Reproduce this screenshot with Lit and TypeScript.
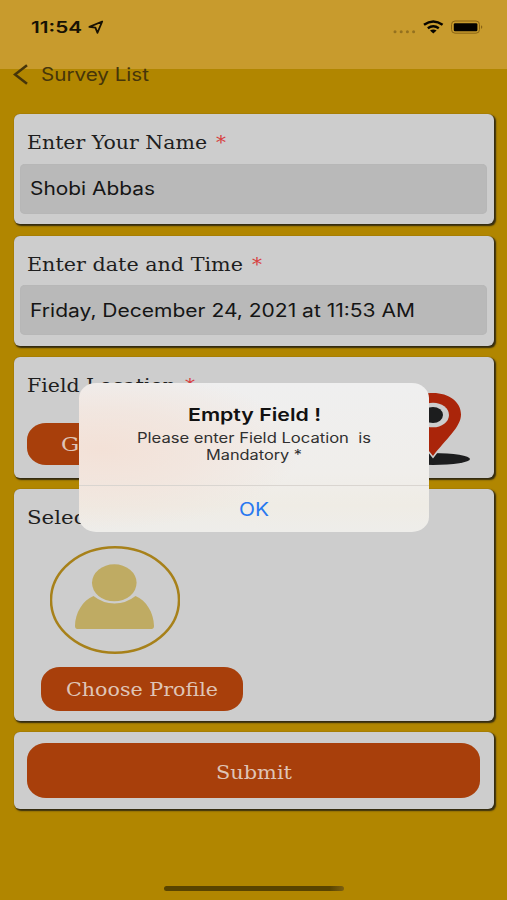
import { LitElement, html, css, svg } from "lit";
import { customElement, property } from "lit/decorators.js";

/** One line of text set to an exact measure, with the wide letterforms of the app. */
@customElement("wide-text")
class WideText extends LitElement {
  @property() text = "";
  @property({ type: Number }) measure = 100;

  static styles = css`
    :host { display: block; flex: none; height: 24px; }
    svg { display: block; overflow: visible; }
    text { fill: currentColor; white-space: pre; }
  `;

  render() {
    return html`<svg width=${this.measure} height="24">
      ${svg`<text x="0" y="18" textLength=${this.measure} lengthAdjust="spacingAndGlyphs">${this.text}</text>`}
    </svg>`;
  }
}

@customElement("status-bar")
class StatusBar extends LitElement {
  static styles = css`
    :host { display: flex; height: 69px; box-sizing: border-box; padding: 15px 24px 0 31px; background: #c89b2d; color: #171104; font: 600 16px Inter, sans-serif; }
    .right { margin-left: auto; }
    svg { display: block; }
    .arrow { margin: 5px 0 0 6px; }
  `;
  render() {
    return html`
      <wide-text text="11:54" measure="51"></wide-text>
      <svg class="arrow" width="16" height="15" viewBox="0 0 16 15">
        <path d="M14.2 1.5 1.4 6.8 7.4 7.6 9.4 12.8Z" fill="none" stroke="#171104" stroke-width="1.8" stroke-linejoin="round" />
      </svg>
      <svg class="right" width="90" height="22" viewBox="0 0 90 22">
        <g fill="#94711f">
          <circle cx="2" cy="16.7" r="1.5" /><circle cx="8.2" cy="16.7" r="1.5" />
          <circle cx="14.4" cy="16.7" r="1.5" /><circle cx="20.6" cy="16.7" r="1.5" />
        </g>
        <g fill="none" stroke="#080500" stroke-width="2.5">
          <path d="M31 9.8Q40.3 3.2 49.6 9.8" />
          <path d="M34.8 13.2Q40.3 9.4 45.8 13.2" />
        </g>
        <path d="M37 15.6Q40.3 13.4 43.6 15.6L40.3 18.4Z" fill="#080500" />
        <rect x="58.5" y="6" width="28" height="12.2" rx="3.6" fill="none" stroke="#8a6414" />
        <rect x="60.8" y="8.2" width="23.6" height="8" rx="1.3" fill="#050300" />
        <path d="M88 10.3Q90.6 12 88 13.9Z" fill="#8a6414" />
      </svg>
    `;
  }
}

@customElement("app-root")
class AppRoot extends LitElement {
  static styles = css`
    :host { display: block; position: relative; width: 507px; height: 900px; overflow: hidden; background: #b18600; }
    .nav { display: flex; align-items: flex-start; height: 45px; color: #46350a; font: 400 18px Inter, sans-serif; }
    .chevron { display: block; flex: none; margin: -5px 0 0 13px; }
    .nav wide-text { margin: -6px 0 0 13px; }
    .cards { display: flex; flex-direction: column; margin: 0 13px 0 14px; }
    .card { box-sizing: border-box; border-radius: 6px; background: #cdcdcd; box-shadow: 1.5px 1.5px 1.5px #332b10, 0 0 1px #77622a; }
    .name { height: 110px; margin-bottom: 11.5px; }
    .date { height: 110.5px; margin-bottom: 10.5px; }
    .location { position: relative; height: 121.5px; margin-bottom: 11px; }
    .profile { height: 232px; margin-bottom: 11px; }
    .send { height: 77px; padding: 11px 14px 0 13px; }
    .label { display: flex; gap: 8.5px; height: 49.5px; box-sizing: border-box; padding: 17px 0 0 13px; color: #1e1e1e; font: 400 19px "DejaVu Serif", serif; }
    .star { color: #d8403d; }
    .field { display: flex; height: 50px; margin: 0 7px 0 6px; box-sizing: border-box; padding: 13.5px 0 0 9.5px; border-radius: 5px; background: #b9b9b9; box-shadow: inset 0 0 1px #aaa; color: #151515; font: 400 18px Inter, sans-serif; }
    .button { display: flex; align-items: center; justify-content: center; box-sizing: border-box; padding: 2px 0 0; border: 0; border-radius: 19px / 17px; background: #a83f0b; color: #dfc4b6; font: 400 19px "DejaVu Serif", serif; }
    .locate { justify-content: flex-start; width: 202px; height: 42px; margin: 17px 0 0 13px; padding-left: 34px; }
    .choose { width: 202px; height: 44px; margin: 13px 0 0 27px; }
    .submit { width: 453px; height: 55px; padding-top: 4px; }
    .pin { position: absolute; right: 22px; top: 34px; }
    .avatar { display: block; margin: 7px 0 0 36px; }
    .home { position: absolute; left: 164px; top: 886px; width: 180px; height: 5px; border-radius: 3px; background: linear-gradient(90deg, #594400 92%, #7d6010); }
    .alert { position: absolute; left: 79px; top: 383px; width: 350px; height: 149px; box-sizing: border-box; border-radius: 17px / 15px; display: flex; flex-direction: column; align-items: center; padding-top: 20px; color: #171717;
      background: radial-gradient(ellipse 200px 80px at 22px 66px, #f3e1d7 0, #f3e1d799 50%, #f3e1d700 100%), linear-gradient(180deg, #efefef, #f0eeeb 60%, #efece5 82%, #eeedea); }
    .title { font: 600 17.5px Inter, sans-serif; color: #111; }
    .line { font: 400 13.8px Inter, sans-serif; color: #303030; height: 17px; }
    .first { margin-top: -2px; }
    .ok { display: flex; justify-content: center; width: 100%; margin-top: 25.5px; padding: 12px 0 0; border: 0; border-top: 1px solid #d9d5d0; background: none; color: #2878f0; font: 400 18px Inter, sans-serif; }
  `;

  private label(text: string, measure: number, required = true) {
    return html`<div class="label">
      <wide-text text=${text} measure=${measure}></wide-text>
      ${required ? html`<wide-text class="star" text="*" measure="10"></wide-text>` : ""}
    </div>`;
  }

  render() {
    return html`
      <status-bar></status-bar>
      <div class="nav">
        <svg class="chevron" width="15" height="21" viewBox="0 0 15 21">
          <path d="M14 1.2 2 10.5 14 19.8" fill="none" stroke="#46350a" stroke-width="2.6" />
        </svg>
        <wide-text text="Survey List" measure="108"></wide-text>
      </div>
      <main class="cards">
        <section class="card name">
          ${this.label("Enter Your Name", 180)}
          <div class="field"><wide-text text="Shobi Abbas" measure="125"></wide-text></div>
        </section>
        <section class="card date">
          ${this.label("Enter date and Time", 216)}
          <div class="field"><wide-text text="Friday, December 24, 2021 at 11:53 AM" measure="385"></wide-text></div>
        </section>
        <section class="card location">
          ${this.label("Field Location", 149)}
          <button class="button locate"><wide-text text="Get Location" measure="148"></wide-text></button>
          <svg class="pin" width="76" height="78" viewBox="0 0 76 78">
            <ellipse cx="37" cy="68" rx="37" ry="6" fill="#1c1d1e" />
            <path d="M37 2C53 2 65 11 65 23.5 65 36 50 48 37 65 24 48 9 36 9 23.5 9 11 21 2 37 2Z" fill="#aa250a" stroke="#cdcdcd" stroke-width="3" paint-order="stroke" />
            <ellipse cx="37" cy="24" rx="16" ry="12.3" fill="#cdcdcd" />
            <ellipse cx="37" cy="24" rx="10" ry="8" fill="#1c1d1e" />
          </svg>
        </section>
        <section class="card profile">
          ${this.label("Select Profile", 145, false)}
          <svg class="avatar" width="130" height="108" viewBox="0 0 130 108">
            <ellipse cx="65" cy="54" rx="64" ry="52.7" fill="none" stroke="#a7811a" stroke-width="2.5" />
            <path d="M43.5 50Q53 57.5 64.5 57.5 76 57.5 85.5 50C96 54 104 67 104 80Q104 83 101.5 83H27.5Q25 83 25 80C25 67 33 54 43.5 50Z" fill="#bfab63" />
            <ellipse cx="64.3" cy="36.8" rx="22.3" ry="18.5" fill="#bfab63" />
          </svg>
          <button class="button choose"><wide-text text="Choose Profile" measure="152"></wide-text></button>
        </section>
        <section class="card send">
          <button class="button submit"><wide-text text="Submit" measure="76"></wide-text></button>
        </section>
      </main>
      <div class="home"></div>
      <div class="alert" role="alertdialog">
        <wide-text class="title" text="Empty Field !" measure="133"></wide-text>
        <wide-text class="line first" text="Please enter Field Location  is" measure="234"></wide-text>
        <wide-text class="line" text="Mandatory *" measure="96"></wide-text>
        <button class="ok"><wide-text text="OK" measure="30"></wide-text></button>
      </div>
    `;
  }
}
